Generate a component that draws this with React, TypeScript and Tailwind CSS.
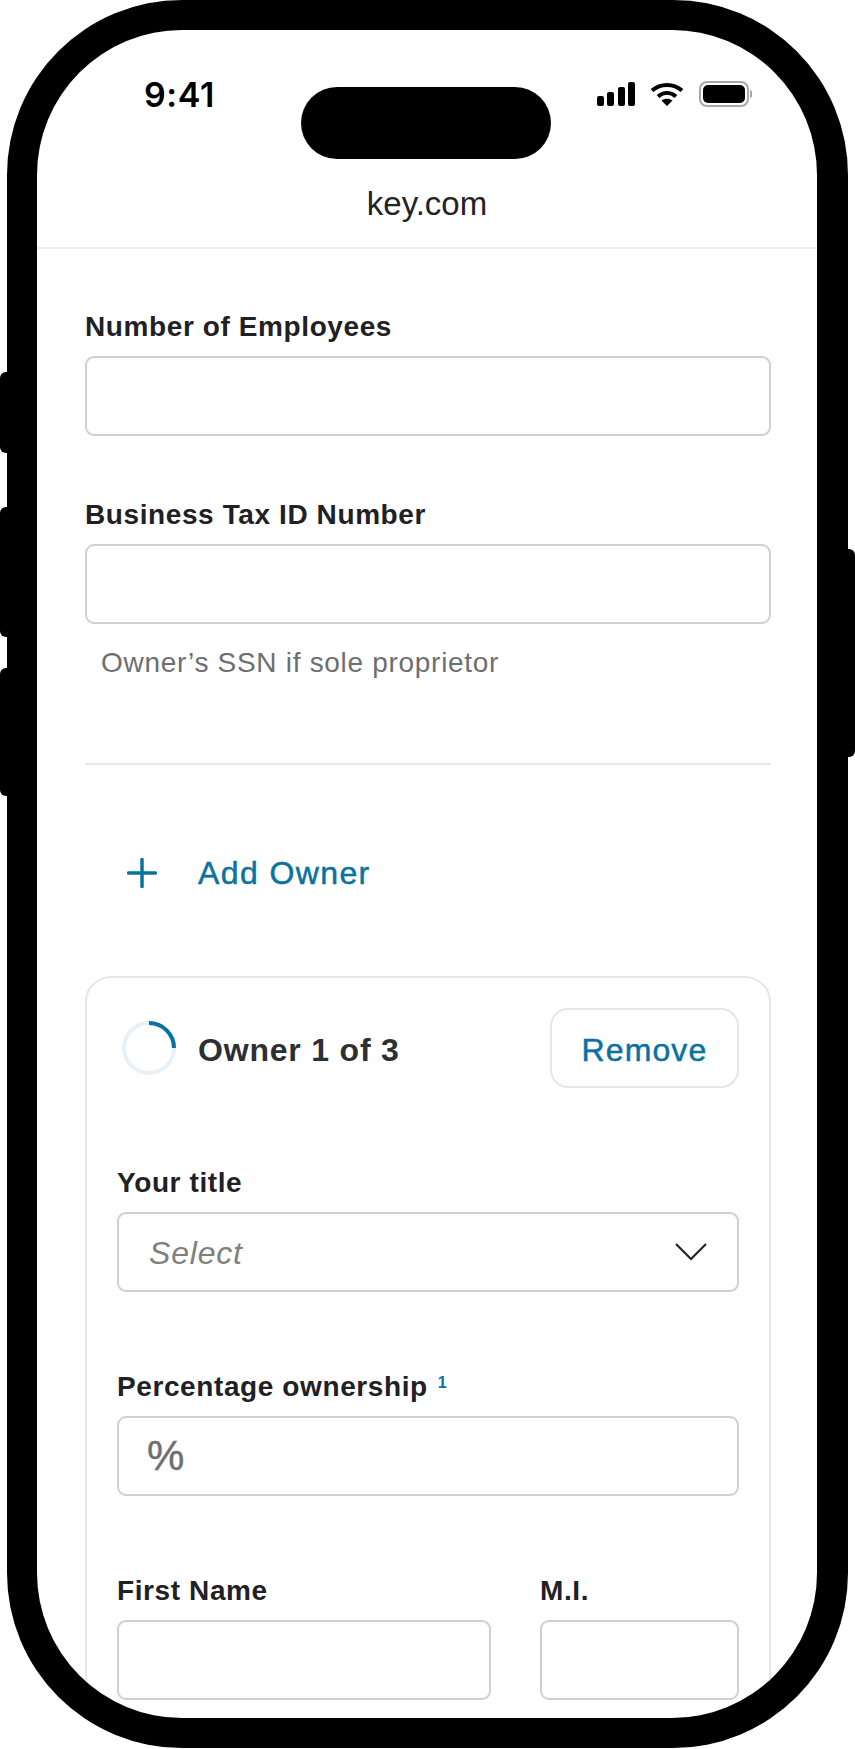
const sans = '[font-family:"Liberation_Sans",Arial,sans-serif]';
const labelClass =
  'block h-[32px] leading-[32px] text-[28px] font-bold tracking-[0.6px] text-[#1f2124] mb-[13px]';
const boxClass = 'block w-full h-[80px] rounded-[9px] border-2 border-[#cfcfcf] bg-white outline-none';

function Field({ label, className }: { label: string; className?: string }) {
  return (
    <div className={className}>
      <label className={labelClass}>{label}</label>
      <input className={boxClass} />
    </div>
  );
}

function SignalBars() {
  return (
    <div className="flex items-end gap-[3.5px] h-[24px]">
      <div className="w-[7px] h-[10px] rounded-[2px] bg-black" />
      <div className="w-[7px] h-[14px] rounded-[2px] bg-black" />
      <div className="w-[7px] h-[19px] rounded-[2px] bg-black" />
      <div className="w-[7px] h-[24px] rounded-[2px] bg-black" />
    </div>
  );
}

function Wifi() {
  return (
    <svg width="34" height="24" viewBox="0 0 34 24" fill="none">
      <path d="M2 8.5C10.5 1 23.5 1 32 8.5" stroke="#000" strokeWidth="4" />
      <path d="M8 14.5C13.5 9.8 20.5 9.8 26 14.5" stroke="#000" strokeWidth="4" />
      <path d="M11.5 18.5C15 16 19 16 22.5 18.5L17 24Z" fill="#000" />
    </svg>
  );
}

function Battery() {
  return (
    <div className="flex items-center gap-[1px]">
      <div className="w-[50px] h-[26px] rounded-[8px] border-2 border-[#a8a8a8] p-[2px]">
        <div className="w-full h-full rounded-[5px] bg-black" />
      </div>
      <div className="w-[2px] h-[8px] rounded-r-[2px] bg-[#a8a8a8]" />
    </div>
  );
}

function Spinner() {
  return (
    <svg width="54" height="54" viewBox="0 0 54 54" fill="none">
      <circle cx="27" cy="27" r="25" stroke="#e8f1f7" strokeWidth="4" />
      <path d="M27 2A25 25 0 0 1 52 27" stroke="#0a72a0" strokeWidth="4" />
    </svg>
  );
}

export default function App() {
  return (
    <div className={`relative w-[855px] h-[1749px] bg-white overflow-hidden ${sans}`}>
      {/* side buttons */}
      <div className="absolute left-0 top-[372px] w-[12px] h-[81px] rounded-l-[6px] bg-black" />
      <div className="absolute left-0 top-[507px] w-[12px] h-[130px] rounded-l-[6px] bg-black" />
      <div className="absolute left-0 top-[668px] w-[12px] h-[128px] rounded-l-[6px] bg-black" />
      <div className="absolute right-0 top-[549px] w-[12px] h-[208px] rounded-r-[6px] bg-black" />

      <div className="relative ml-[7px] w-[841px] h-[1748px] rounded-[175px] bg-black p-[30px]">
        <div className="relative w-[780px] h-[1688px] rounded-[145px] bg-white overflow-hidden">
          <div className="absolute left-[264px] top-[57px] w-[250px] h-[72px] rounded-[36px] bg-black" />

          <header className="border-b-2 border-[#eeeeee] pt-[51px] pb-[23px]">
            <div className="flex items-center justify-between h-[26px] pl-[107px] pr-[65px]">
              <span className="[font-family:Inter,sans-serif] text-[34px] font-semibold tracking-[0.6px] text-black">
                9:41
              </span>
              <div className="flex items-center gap-[15px]">
                <SignalBars />
                <Wifi />
                <Battery />
              </div>
            </div>
            <div className="mt-[77px] h-[40px] leading-[40px] text-center text-[33px] text-[#222326]">key.com</div>
          </header>

          <main className="pl-[48px] pr-[46px] pt-[62px]">
            <Field label="Number of Employees" />
            <Field label="Business Tax ID Number" className="mt-[63px]" />
            <p className="mt-[23px] pl-[16px] h-[32px] leading-[32px] text-[28px] tracking-[0.7px] text-[#6d6e71]">
              Owner’s SSN if sole proprietor
            </p>
            <hr className="mt-[84px] border-t-2 border-[#e9e9e9]" />

            <button className="mt-[88px] ml-[42px] flex items-center gap-[41px] h-[40px] text-[#0a72a0]">
              <svg width="30" height="30" viewBox="0 0 30 30" fill="none">
                <path d="M15 1.5V28.5M1.5 15H28.5" stroke="currentColor" strokeWidth="3.5" strokeLinecap="round" />
              </svg>
              <span className="text-[32px] tracking-[1.4px] [-webkit-text-stroke:0.5px_#0a72a0]">Add Owner</span>
            </button>

            <section className="mt-[83px] rounded-[26px] border-2 border-[#e6e6e6] pt-[30px] pl-[30px] pr-[30px] pb-[60px]">
              <div className="flex items-center justify-between h-[80px]">
                <div className="flex items-center pl-[5px] gap-[22px]">
                  <Spinner />
                  <span className="pt-[3px] text-[32px] font-bold tracking-[0.8px] text-[#2d2f33]">Owner 1 of 3</span>
                </div>
                <button className="w-[189px] h-[80px] pt-[3px] rounded-[18px] border-2 border-[#e6e6e6] text-[32px] tracking-[1.1px] text-[#0a72a0] [-webkit-text-stroke:0.5px_#0a72a0]">
                  Remove
                </button>
              </div>

              <div className="mt-[79px]">
                <label className={labelClass}>Your title</label>
                <div className="flex items-center justify-between h-[80px] rounded-[9px] border-2 border-[#cfcfcf] pl-[30px] pr-[30px]">
                  <span className="pt-[2px] text-[32px] italic tracking-[0.8px] text-[#808080]">Select</span>
                  <svg width="32" height="18" viewBox="0 0 32 18" fill="none">
                    <path d="M1 1L16 16L31 1" stroke="#222326" strokeWidth="2.2" />
                  </svg>
                </div>
              </div>

              <div className="mt-[79px]">
                <label className={labelClass}>
                  Percentage ownership
                  <sup className="ml-[10px] text-[16px] font-bold tracking-normal text-[#0a72a0]">1</sup>
                </label>
                <div className="flex items-center h-[80px] rounded-[9px] border-2 border-[#cfcfcf] pl-[28px]">
                  <span className="text-[42px] leading-none text-[#6d6e71] [-webkit-text-stroke:0.4px_#6d6e71]">%</span>
                </div>
              </div>

              <div className="mt-[79px] flex gap-[49px]">
                <Field label="First Name" className="w-[374px]" />
                <Field label="M.I." className="w-[199px]" />
              </div>
            </section>
          </main>
        </div>
      </div>
    </div>
  );
}
